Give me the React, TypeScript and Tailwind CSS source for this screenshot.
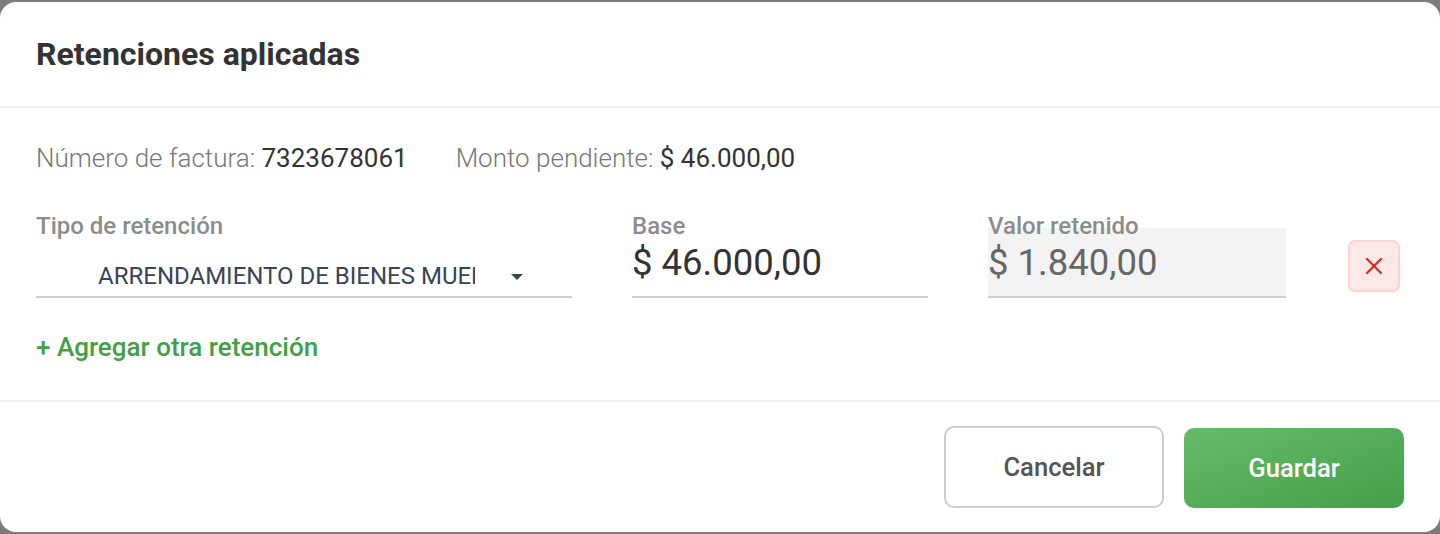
import { X } from "lucide-react";

function Field({ label, children }: { label: string; children: React.ReactNode }) {
  return (
    <div className="flex flex-col">
      <div className="h-[24px] text-[24px] leading-[24px] font-medium text-[#8c8c8c]">{label}</div>
      {children}
    </div>
  );
}

export default function App() {
  return (
    <div
      className="h-[534px] bg-[#7d7d7d] pt-[2px]"
      style={{ fontFamily: "Roboto, 'Noto Sans', sans-serif" }}
    >
      <div className="flex h-[530px] flex-col rounded-[16px] bg-white">
        {/* header */}
        <div className="flex h-[106px] items-center border-b-2 border-[#eeeeee] px-9">
          <h1 className="text-[32px] font-bold text-[#333333]">Retenciones aplicadas</h1>
        </div>

        {/* body */}
        <div className="flex h-[294px] flex-col border-b-2 border-[#eeeeee] px-9 pt-[37px]">
          <div className="flex gap-[48px] text-[26px] leading-[26px]">
            <div>
              <span className="font-light text-[#777777]">Número de factura: </span>
              <span className="text-[#333333]">7323678061</span>
            </div>
            <div>
              <span className="font-light text-[#777777]">Monto pendiente: </span>
              <span className="text-[#333333]">$ 46.000,00</span>
            </div>
          </div>

          <div className="mt-[43px] flex">
            <div className="w-[536px]">
              <Field label="Tipo de retención">
                <div className="flex h-[60px] items-end border-b-2 border-[#d0d0d0] pb-[7px]">
                  <div className="ml-[62px] w-[377px] overflow-hidden whitespace-nowrap text-[24px] leading-[26px] text-[#394457]">
                    ARRENDAMIENTO DE BIENES MUEBLES
                  </div>
                  <div className="ml-[36px] mb-[9px] h-0 w-0 border-x-[6px] border-t-[6px] border-x-transparent border-t-[#394457]" />
                </div>
              </Field>
            </div>

            <div className="ml-[60px] w-[296px]">
              <Field label="Base">
                <div className="h-[60px] border-b-2 border-[#d0d0d0] text-[36.5px] leading-[50px] text-[#333333]">
                  $ 46.000,00
                </div>
              </Field>
            </div>

            <div className="ml-[60px] flex w-[298px] flex-col">
              <div className="relative z-10 h-[14px] whitespace-nowrap text-[24px] leading-[24px] font-medium text-[#8c8c8c]">
                Valor retenido
              </div>
              <div className="h-[70px] border-b-2 border-[#cfcfcf] bg-[#f3f3f3] pt-[10px] text-[36.5px] leading-[50px] text-[#666666]">
                $ 1.840,00
              </div>
            </div>

            <button className="ml-[62px] mt-[26px] flex h-[52px] w-[52px] items-center justify-center rounded-[7px] border-2 border-[#fdd0d2] bg-[#fde8e8]">
              <X className="h-[28px] w-[28px] text-[#d32f2f]" strokeWidth={2} />
            </button>
          </div>

          <div className="mt-[36px] text-[26px] leading-[26px] font-medium text-[#43a047]">
            + Agregar otra retención
          </div>
        </div>

        {/* footer */}
        <div className="flex flex-1 items-start justify-end gap-5 px-9 pt-[24px]">
          <button className="h-[82px] w-[220px] rounded-[10px] border-2 border-[#cccccc] bg-white text-[25.6px] font-medium text-[#555555]">
            Cancelar
          </button>
          <button className="mt-[2px] h-[80px] w-[220px] rounded-[10px] bg-gradient-to-br from-[#66bb6a] to-[#43a047] text-[25.6px] font-medium text-white">
            Guardar
          </button>
        </div>
      </div>
    </div>
  );
}
